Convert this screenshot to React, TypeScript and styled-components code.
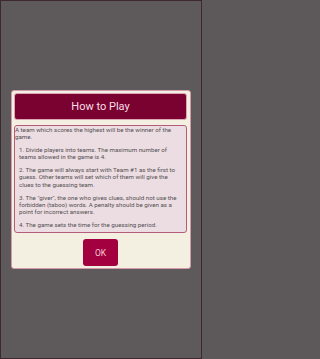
import React from 'react';
import styled, { createGlobalStyle } from 'styled-components';

const GlobalStyle = createGlobalStyle`
  html, body {
    margin: 0;
    padding: 0;
    background: #5d585a;
  }
  body {
    font-family: Roboto, 'Liberation Sans', sans-serif;
  }
`;

const Screen = styled.div`
  box-sizing: border-box;
  width: 202px;
  height: 359px;
  border: 1px solid #3b2831;
  background: #5e595b;
  display: flex;
  align-items: center;
  justify-content: center;
`;

const Dialog = styled.div`
  box-sizing: border-box;
  width: 180px;
  padding: 2px 3px 2px 2px;
  background: #f4f0e1;
  border: 1px solid #d49aab;
  border-radius: 3px;
  display: flex;
  flex-direction: column;
  align-items: center;
`;

const Header = styled.div`
  box-sizing: border-box;
  width: 100%;
  height: 27px;
  background: #7a0231;
  border: 1px solid #dba5b6;
  border-radius: 3px;
  display: flex;
  align-items: center;
  justify-content: center;
  color: #f6dfe6;
  font-size: 11px;
`;

const Rules = styled.div`
  box-sizing: border-box;
  width: 100%;
  margin-top: 5px;
  padding: 1px 6px 3px 0;
  background: #ecdde2;
  border: 1px solid #b45c79;
  border-radius: 3px;
  color: #545052;
  font-size: 6.2px;
  line-height: 7.1px;
`;

const Para = styled.p<{ $indent?: boolean }>`
  margin: 0 0 6px 0;
  padding-left: ${(p) => (p.$indent ? '4px' : '0')};
  &:last-child {
    margin-bottom: 0;
  }
`;

const OkButton = styled.button`
  margin-top: 6px;
  width: 35px;
  height: 27px;
  border: none;
  border-radius: 3px;
  background: #a2003e;
  color: #f3c9d6;
  font-family: Roboto, 'Liberation Sans', sans-serif;
  font-size: 8.5px;
  padding: 0;
`;

const rules = [
  '1. Divide players into teams. The maximum number of teams allowed in the game is 4.',
  '2. The game will always start with Team #1 as the first to guess. Other teams will set which of them will give the clues to the guessing team.',
  '3. The "giver", the one who gives clues, should not use the forbidden (taboo) words. A penalty should be given as a point for incorrect answers.',
  '4. The game sets the time for the guessing period.',
];

function App() {
  return (
    <>
      <GlobalStyle />
      <Screen>
        <Dialog>
          <Header>How to Play</Header>
          <Rules>
            <Para>A team which scores the highest will be the winner of the game.</Para>
            {rules.map((r) => (
              <Para key={r} $indent>
                {r}
              </Para>
            ))}
          </Rules>
          <OkButton>OK</OkButton>
        </Dialog>
      </Screen>
    </>
  );
}

export default App;
